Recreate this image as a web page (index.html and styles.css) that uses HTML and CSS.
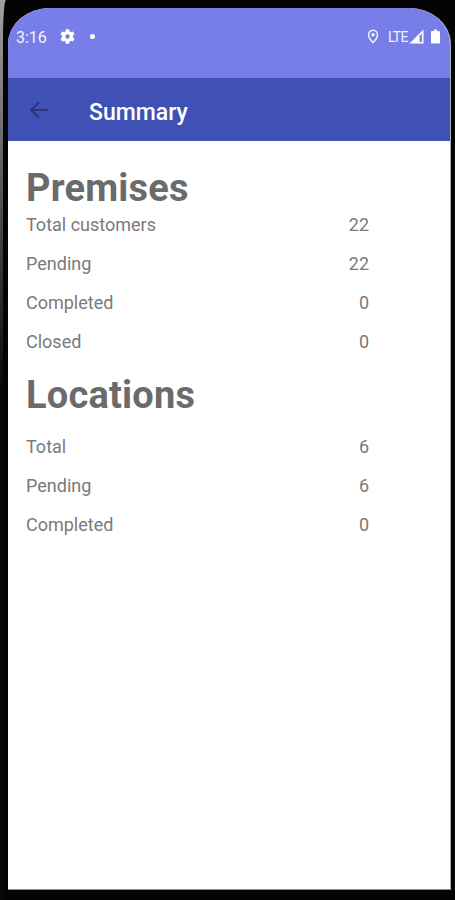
FILE: index.html
```html
<!DOCTYPE html>
<html lang="en">
<head>
    <meta charset="UTF-8">
    <meta name="viewport" content="width=device-width, initial-scale=1.0">
    <title>Summary</title>
    <link rel="stylesheet" href="styles.css">
</head>
<body>
    <div class="phone">
        <div class="screen">
            <div class="status-bar">
                <span class="time">3:16</span>
                <svg class="gear" viewBox="2 2 20 20" width="15" height="15">
                    <path fill-rule="evenodd" d="M19.14 12.94c.04-.3.06-.61.06-.94s-.02-.64-.07-.94l2.03-1.58a.49.49 0 0 0 .12-.61l-1.92-3.32a.49.49 0 0 0-.59-.22l-2.39.96a7 7 0 0 0-1.62-.94l-.36-2.54a.48.48 0 0 0-.48-.41h-3.84a.48.48 0 0 0-.47.41l-.36 2.54a7.4 7.4 0 0 0-1.62.94l-2.39-.96a.48.48 0 0 0-.59.22L2.74 8.87a.47.47 0 0 0 .12.61l2.03 1.58a6 6 0 0 0-.02 1.88l-2.03 1.58a.49.49 0 0 0-.12.61l1.92 3.32c.12.22.37.29.59.22l2.39-.96c.5.38 1.03.7 1.62.94l.36 2.54c.05.24.24.41.48.41h3.84c.24 0 .44-.17.47-.41l.36-2.54a7 7 0 0 0 1.62-.94l2.39.96c.22.08.47 0 .59-.22l1.92-3.32a.47.47 0 0 0-.12-.61zM12 15a3 3 0 1 1 0-6 3 3 0 0 1 0 6z"/>
                </svg>
                <span class="dot"></span>
                <div class="status-icons">
                    <svg class="pin" viewBox="0 0 12 15" width="12" height="15">
                        <path d="M6 1.2a4.5 4.5 0 0 0-4.5 4.5C1.5 9 6 13.5 6 13.5S10.5 9 10.5 5.7A4.5 4.5 0 0 0 6 1.2z"/>
                        <circle cx="6" cy="5.7" r="1"/>
                    </svg>
                    <span class="network">LTE</span>
                    <svg class="signal" viewBox="0 0 15 15" width="15" height="15">
                        <path fill-rule="evenodd" d="M14.5 0.5V14.5H0.5zM12.9 4.5L10.5 7V13H12.9z"/>
                    </svg>
                    <svg class="battery" viewBox="0 0 9 15" width="9" height="15">
                        <path d="M3 0.5H6V2H8Q9 2 9 3V13.5Q9 14.5 8 14.5H1Q0 14.5 0 13.5V3Q0 2 1 2H3z"/>
                    </svg>
                </div>
            </div>

            <header>
                <svg class="back" viewBox="0 0 18 18" width="18" height="18">
                    <path d="M17.5 9H1.5M9 1.2L1.2 9L9 16.8"/>
                </svg>
                <h1>Summary</h1>
            </header>

            <main>
                <section>
                    <h2>Premises</h2>
                    <div class="row"><span>Total customers</span><span>22</span></div>
                    <div class="row"><span>Pending</span><span>22</span></div>
                    <div class="row"><span>Completed</span><span>0</span></div>
                    <div class="row"><span>Closed</span><span>0</span></div>
                </section>
                <section class="locations">
                    <h2>Locations</h2>
                    <div class="row"><span>Total</span><span>6</span></div>
                    <div class="row"><span>Pending</span><span>6</span></div>
                    <div class="row"><span>Completed</span><span>0</span></div>
                </section>
            </main>
        </div>
    </div>
</body>
</html>
```
FILE: styles.css
```css
* {
    box-sizing: border-box;
}

body {
    margin: 0;
    font-family: Roboto, sans-serif;
    background: linear-gradient(#a0a0a0, #777 110px, #444 230px, #080808 390px);
}

/* device frame */
.phone {
    height: 900px;
    margin-left: 3px;
    padding: 8px 4px 10px 4.5px;
    background-color: #040405;
    border-radius: 3px 0 0 0 / 40px 0 0 0;
}

.screen {
    height: 882px;
    overflow: hidden;
    background-color: #fff;
    border-right: 1px solid #aaa;
    border-bottom: 1px solid #888;
    border-radius: 42px 42px 0 0 / 36px 36px 0 0;
}

.status-bar {
    display: flex;
    align-items: center;
    height: 70px;
    padding: 0 10px 13px 8.5px;
    background-color: #787ee8;
    color: #f2f3ff;
}

.status-bar svg {
    fill: #fff;
}

.time {
    width: 32px;
    padding-top: 1px;
    font-size: 16px;
}

.gear {
    margin-left: 12px;
}

.dot {
    width: 5px;
    height: 5px;
    margin-left: 15px;
    border-radius: 50%;
    background-color: #fff;
}

.status-icons {
    display: flex;
    align-items: center;
    margin-left: auto;
}

.status-bar .pin {
    margin-right: 9px;
    fill: none;
    stroke: #f2f3ff;
    stroke-width: 1.5;
}

.network {
    width: 21px;
    font-size: 14px;
    letter-spacing: -0.8px;
}

.battery {
    margin-left: 7px;
}

header {
    display: flex;
    align-items: center;
    height: 63px;
    padding: 5px 22.5px 0;
    background-color: #3f51b5;
}

.back {
    margin-top: -4px;
    fill: none;
    stroke: #2b3573;
    stroke-width: 2;
}

h1 {
    margin: 0 0 0 41px;
    font-size: 23px;
    font-weight: 500;
    color: #fff;
}

main {
    padding: 29px 81px 0 18.5px;
    color: #7a7a7a;
}

h2 {
    margin: 0 0 -1px;
    font-size: 38px;
    line-height: 36px;
    letter-spacing: 0.2px;
    color: #6b6b6b;
}

.row {
    display: flex;
    justify-content: space-between;
    font-size: 18px;
    line-height: 39px;
}

.locations {
    margin-top: 16px;
}

.locations h2 {
    margin-bottom: 14px;
}
```
